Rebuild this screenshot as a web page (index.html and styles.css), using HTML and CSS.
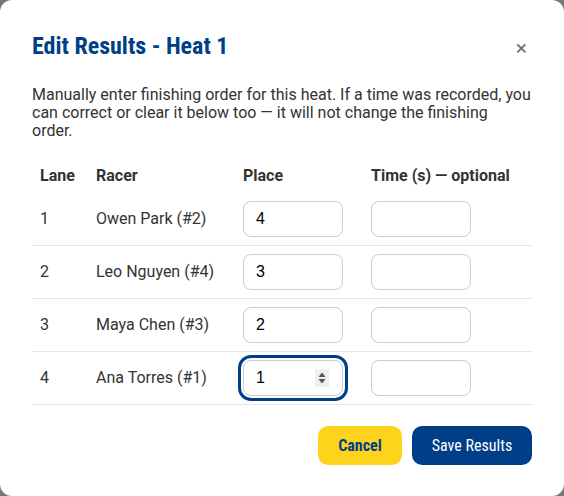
FILE: index.html
```html
<!DOCTYPE html>
<html lang="en">
<head>
<meta charset="utf-8">
<title>Edit Results - Heat 1</title>
<link rel="stylesheet" href="styles.css">
</head>
<body>
<div class="dialog">
  <div class="dialog-header">
    <h2 class="dialog-title">Edit Results - Heat 1</h2>
    <button class="close-btn" type="button" aria-label="Close">×</button>
  </div>
  <p class="dialog-desc">Manually enter finishing order for this heat. If a time was recorded, you can correct or clear it below too — it will not change the finishing order.</p>
  <table class="results">
    <colgroup>
      <col class="c-lane"><col class="c-racer"><col class="c-place"><col class="c-time">
    </colgroup>
    <thead>
      <tr><th>Lane</th><th>Racer</th><th>Place</th><th>Time (s) — optional</th></tr>
    </thead>
    <tbody>
      <tr><td>1</td><td>Owen Park (#2)</td><td><input class="field" type="number" value="4"></td><td><input class="field" type="text"></td></tr>
      <tr><td>2</td><td>Leo Nguyen (#4)</td><td><input class="field" type="number" value="3"></td><td><input class="field" type="text"></td></tr>
      <tr><td>3</td><td>Maya Chen (#3)</td><td><input class="field" type="number" value="2"></td><td><input class="field" type="text"></td></tr>
      <tr><td>4</td><td>Ana Torres (#1)</td><td><span class="field-wrap"><input class="field focused" type="number" value="1"><span class="spinner"><svg width="14" height="18" viewBox="0 0 14 18"><path d="M7 3.5 L10.5 8 H3.5 Z" fill="#555"/><path d="M7 14.5 L10.5 10 H3.5 Z" fill="#555"/></svg></span></span></td><td><input class="field" type="text"></td></tr>
    </tbody>
  </table>
  <div class="actions">
    <button class="btn btn-cancel" type="button">Cancel</button>
    <button class="btn btn-save" type="button">Save Results</button>
  </div>
</div>
</body>
</html>
```

FILE: styles.css
```css
html, body {
  margin: 0;
  padding: 0;
}
body {
  background: #777777;
  font-family: Roboto, "Liberation Sans", sans-serif;
  color: #333333;
}
.dialog {
  box-sizing: border-box;
  width: 564px;
  height: 496px;
  background: #ffffff;
  border-radius: 12px;
  padding: 32px 32px 32px 32px;
}
.dialog-header {
  display: flex;
  align-items: center;
  justify-content: space-between;
}
.dialog-title {
  margin: 0;
  font-family: "Roboto Condensed", Roboto, sans-serif;
  font-weight: 700;
  font-size: 24px;
  line-height: 29px;
  color: #003f87;
}
.close-btn {
  border: none;
  background: transparent;
  font-family: Roboto, sans-serif;
  font-size: 21px;
  line-height: 22px;
  color: #707070;
  padding: 0;
  margin-right: 5px;
  margin-top: 2px;
}
.dialog-desc {
  margin: 25px 0 19px 0;
  font-size: 16px;
  line-height: 18px;
  color: #333333;
}
.results {
  width: 500px;
  border-collapse: collapse;
  table-layout: fixed;
}
.c-lane { width: 56px; }
.c-racer { width: 147px; }
.c-place { width: 128px; }
.c-time { width: 169px; }
.results th {
  text-align: left;
  font-weight: 700;
  font-size: 16px;
  line-height: 18px;
  padding: 8px;
  color: #333333;
}
.results td {
  padding: 8px;
  font-size: 16px;
  line-height: 18px;
  color: #333333;
  border-bottom: 1px solid #e6e6e6;
  vertical-align: middle;
}
.field {
  box-sizing: border-box;
  width: 100px;
  height: 36px;
  border: 1px solid #cccccc;
  border-radius: 8px;
  padding: 0 12px;
  font-family: "Liberation Sans", Arial, sans-serif;
  font-size: 16px;
  color: #000000;
  background: #ffffff;
  display: block;
  -moz-appearance: textfield;
}
.field::-webkit-inner-spin-button,
.field::-webkit-outer-spin-button {
  -webkit-appearance: none;
  margin: 0;
}
.field-wrap {
  position: relative;
  display: block;
  width: 100px;
}
.focused {
  outline: 3px solid #003f87;
  outline-offset: 2px;
}
.spinner {
  position: absolute;
  left: 72px;
  top: 9px;
  width: 14px;
  height: 18px;
  background: #efefef;
  display: block;
}
.spinner svg {
  display: block;
}
.actions {
  display: flex;
  justify-content: flex-end;
  gap: 10px;
  margin-top: 21px;
}
.btn {
  height: 39px;
  border: none;
  border-radius: 10px;
  font-family: "Roboto Condensed", Roboto, sans-serif;
  font-size: 16px;
  padding: 0 18px;
}
.btn-cancel {
  width: 84px;
  background: #fdd31c;
  color: #003f87;
  font-weight: 700;
}
.btn-save {
  width: 120px;
  background: #003f87;
  color: #ffffff;
  font-weight: 400;
}
```
